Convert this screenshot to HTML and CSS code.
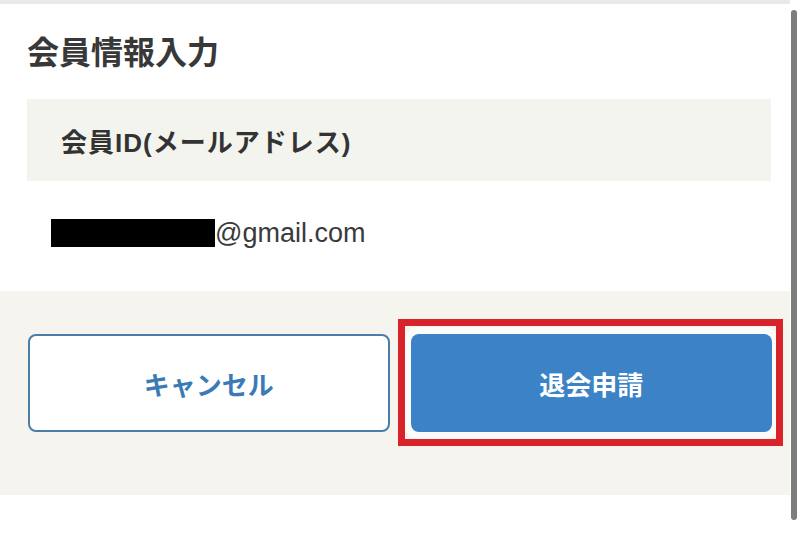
FILE: index.html
```html
<!DOCTYPE html>
<html lang="ja">
<head>
  <meta charset="UTF-8">
  <meta name="viewport" content="width=device-width, initial-scale=1.0">
  <title>退会申請</title>
  <link rel="stylesheet" href="styles.css">
</head>

<body>

  <div class="topbar"></div>

  <!-- 会員情報 -->
  <div class="panel">
    <h1 class="title">会員情報入力</h1>
    <div class="field-label">会員ID(メールアドレス)</div>
    <div class="field-value">
      <span class="mask"></span><span class="email">@gmail.com</span>
    </div>
  </div>

  <!-- ボタン -->
  <div class="actions">
    <button type="button" class="btn btn-cancel">キャンセル</button>
    <div class="btn-wrap">
      <button type="button" class="btn btn-submit">退会申請</button>
    </div>
  </div>

  <div class="scrollbar"></div>

</body>
</html>
```

FILE: styles.css
```css
/* Global Styles */
body {
  font-family: "Liberation Sans", "Noto Sans CJK JP", sans-serif;
  margin: 0;
  padding: 0;
  background-color: #fff;
  color: #333;
  width: 790px;
  overflow: hidden;
}

.topbar {
  height: 4px;
  background-color: #e9e9e9;
}

/* 会員情報 */
.panel {
  padding: 0 19px 0 27px;
}

.title {
  margin: 29px 0 26px;
  font-size: 32px;
  line-height: 40px;
  font-weight: 700;
  color: #383838;
}

.field-label {
  height: 82px;
  display: flex;
  align-items: center;
  padding-left: 34px;
  background-color: #f4f4ee;
  font-size: 26px;
  letter-spacing: 1px;
  font-weight: 700;
  color: #333;
}

.field-value {
  height: 110px;
  display: flex;
  align-items: center;
  padding-left: 24px;
  padding-bottom: 6px;
  box-sizing: border-box;
}

.mask {
  display: inline-block;
  width: 164px;
  height: 28px;
  background-color: #000;
}

.email {
  font-size: 27px;
  color: #3a3a3a;
}

/* ボタン */
.actions {
  height: 204px;
  box-sizing: border-box;
  padding: 43px 18px 0 28px;
  background-color: #f5f4ee;
  display: grid;
  grid-template-columns: 1fr 1fr;
  column-gap: 21px;
  align-items: start;
}

.btn {
  width: 100%;
  height: 98px;
  margin: 0;
  padding: 0;
  box-sizing: border-box;
  border-radius: 8px;
  font-family: "Noto Sans CJK JP", sans-serif;
  font-size: 26px;
  font-weight: 700;
  cursor: pointer;
}

.btn-cancel {
  background-color: #fff;
  border: 2px solid #4b7dab;
  color: #3a7bb5;
}

.btn-wrap {
  position: relative;
}

/* 赤枠 */
.btn-wrap::after {
  content: "";
  position: absolute;
  top: -15px;
  left: -13px;
  right: -11px;
  bottom: -14px;
  border: 7px solid #d8232a;
  pointer-events: none;
}

.btn-submit {
  display: block;
  background-color: #3b82c6;
  border: none;
  color: #fff;
  box-shadow: 0 0 0 7px #fbfbfa;
}

.scrollbar {
  position: fixed;
  top: 10px;
  right: 3px;
  width: 6px;
  height: 510px;
  border-radius: 3px;
  background-color: #7d7d7d;
}
```
